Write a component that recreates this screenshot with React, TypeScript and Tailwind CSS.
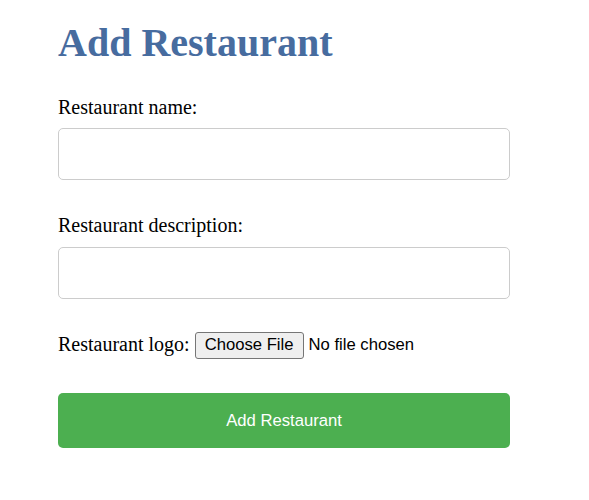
export default function App() {
  return (
    <div className="min-h-screen bg-white px-[58px] pt-[20px] font-['Liberation_Serif','Times_New_Roman',serif] text-black">
      {/* Page title */}
      <h1 className="text-[40px] font-bold leading-[46px] text-[#476c9f]">Add Restaurant</h1>

      <form className="flex w-[452px] flex-col" onSubmit={(e) => e.preventDefault()}>
        <label htmlFor="name" className="mt-[30px] text-[20px] leading-[23px]">
          Restaurant name:
        </label>
        <input
          id="name"
          type="text"
          className="mt-[9px] h-[52px] w-full rounded-[5px] border border-[#cccccc] bg-white px-[10px] outline-none"
        />

        <label htmlFor="description" className="mt-[34px] text-[20px] leading-[23px]">
          Restaurant description:
        </label>
        <input
          id="description"
          type="text"
          className="mt-[10px] h-[52px] w-full rounded-[5px] border border-[#cccccc] bg-white px-[10px] outline-none"
        />

        {/* Logo picker */}
        <div className="mt-[33px] flex h-[27px] items-center">
          <span className="pb-[3px] text-[20px] leading-[23px]">Restaurant logo:</span>
          <span className="ml-[5px] flex h-[27px] items-center rounded-[3px] border border-[#767676] bg-[#efefef] px-[9px] font-['Liberation_Sans',Arial,sans-serif] text-[16.67px] leading-none">
            Choose File
          </span>
          <span className="ml-[5px] font-['Liberation_Sans',Arial,sans-serif] text-[16.67px] leading-none">
            No file chosen
          </span>
        </div>

        <button
          type="submit"
          className="mt-[34px] h-[55px] w-full rounded-[5px] bg-[#4caf50] font-['Liberation_Sans',Arial,sans-serif] text-[16.67px] text-white"
        >
          Add Restaurant
        </button>
      </form>
    </div>
  )
}
